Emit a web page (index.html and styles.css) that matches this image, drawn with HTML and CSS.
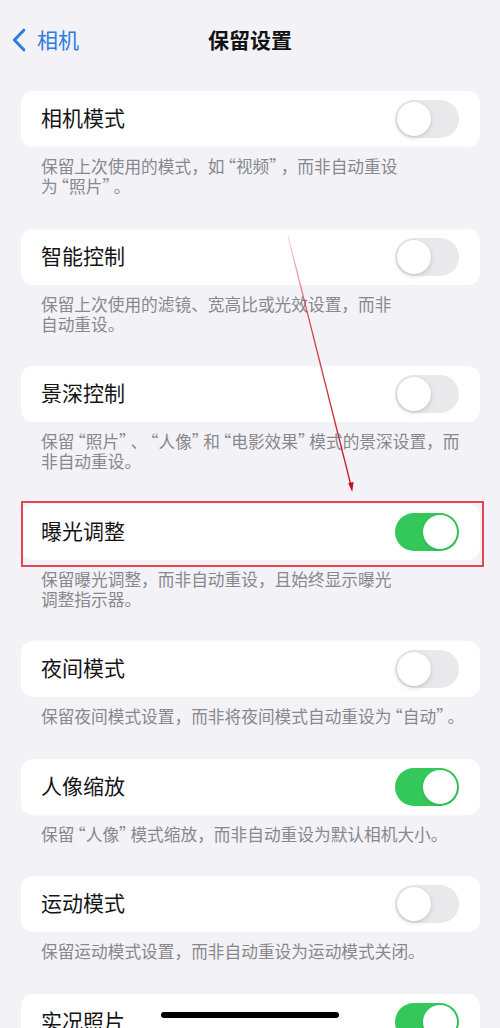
FILE: index.html
```html
<!DOCTYPE html>
<html lang="zh-CN">
<head>
<meta charset="utf-8">
<title>保留设置</title>
<link rel="stylesheet" href="styles.css">
</head>
<body>
<div class="screen">
  <header class="nav">
    <a class="back" href="#">
      <svg class="chevron" viewBox="0 0 14 24" width="14" height="24" aria-hidden="true">
        <path d="M11.8 2.2 L2.4 12 L11.8 21.8" fill="none" stroke="currentColor" stroke-width="3" stroke-linecap="round" stroke-linejoin="round"/>
      </svg>
      <span>相机</span>
    </a>
    <h1 class="title">保留设置</h1>
    <span class="nav-spacer"></span>
  </header>

  <main class="groups">
    <section class="group">
      <div class="cell"><span class="label">相机模式</span><span class="switch"></span></div>
      <p class="note">保留上次使用的模式，如<span class="qo">“</span>视频<span class="qc">”</span>，而非自动重设<br>为<span class="qo">“</span>照片<span class="qc">”</span>。</p>
    </section>
    <section class="group">
      <div class="cell"><span class="label">智能控制</span><span class="switch"></span></div>
      <p class="note">保留上次使用的滤镜、宽高比或光效设置，而非<br>自动重设。</p>
    </section>
    <section class="group">
      <div class="cell"><span class="label">景深控制</span><span class="switch"></span></div>
      <p class="note">保留<span class="qo">“</span>照片<span class="qc">”</span>、<span class="qo">“</span>人像<span class="qc">”</span>和<span class="qo">“</span>电影效果<span class="qc">”</span>模式的景深设置，而<br>非自动重设。</p>
    </section>
    <section class="group">
      <div class="cell"><span class="label">曝光调整</span><span class="switch on"></span></div>
      <p class="note">保留曝光调整，而非自动重设，且始终显示曝光<br>调整指示器。</p>
    </section>
    <section class="group">
      <div class="cell"><span class="label">夜间模式</span><span class="switch"></span></div>
      <p class="note">保留夜间模式设置，而非将夜间模式自动重设为<span class="qo">“</span>自动<span class="qc">”</span>。</p>
    </section>
    <section class="group">
      <div class="cell"><span class="label">人像缩放</span><span class="switch on"></span></div>
      <p class="note">保留<span class="qo">“</span>人像<span class="qc">”</span>模式缩放，而非自动重设为默认相机大小。</p>
    </section>
    <section class="group">
      <div class="cell"><span class="label">运动模式</span><span class="switch"></span></div>
      <p class="note">保留运动模式设置，而非自动重设为运动模式关闭。</p>
    </section>
    <section class="group">
      <div class="cell"><span class="label">实况照片</span><span class="switch on"></span></div>
      <p class="note">保留实况照片设置，而非自动重设为打开实况照片。</p>
    </section>
  </main>

  <!-- highlight frame and pointer drawn over the list -->
  <div class="mark-box"></div>
  <svg class="mark-arrow" viewBox="0 0 500 1028" width="500" height="1028" aria-hidden="true">
    <defs>
      <linearGradient id="fade" x1="288" y1="236" x2="352" y2="490" gradientUnits="userSpaceOnUse">
        <stop offset="0" stop-color="#d21c2a" stop-opacity="0.15"/>
        <stop offset="0.35" stop-color="#d01a28" stop-opacity="0.8"/>
        <stop offset="1" stop-color="#c8101e"/>
      </linearGradient>
    </defs>
    <line x1="288" y1="236" x2="350.6" y2="484" stroke="url(#fade)" stroke-width="1.3"/>
    <path d="M352.2 492 L348.2 483.2 L353.6 482 Z" fill="#c8101e"/>
  </svg>

  <div class="home-bar"></div>
</div>
</body>
</html>
```

FILE: styles.css
```css
* {
  box-sizing: border-box;
}

html,
body {
  margin: 0;
  padding: 0;
}

body {
  background: #f2f2f7;
  font-family: "Noto Sans CJK SC", "Noto Sans", sans-serif;
  color: #111113;
}

.screen {
  position: relative;
  width: 500px;
  height: 1028px;
  overflow: hidden;
  background: #f2f2f7;
}

/* navigation bar */
.nav {
  height: 82px;
  padding-bottom: 3px;
  display: grid;
  grid-template-columns: 1fr auto 1fr;
  align-items: center;
}

.back {
  display: flex;
  align-items: center;
  gap: 11px;
  padding-left: 12px;
  color: #2f7ce0;
  text-decoration: none;
  font-size: 21px;
  line-height: 1;
}

.chevron {
  display: block;
}

.title {
  margin: 0;
  font-size: 21px;
  font-weight: 700;
  line-height: 1;
  color: #121214;
}

/* grouped list */
.groups {
  padding: 9px 20px 0 21px;
}

.group {
  margin-bottom: 32.5px;
}

.cell {
  height: 56px;
  display: flex;
  align-items: center;
  justify-content: space-between;
  padding: 0 21px 0 20px;
  background: #ffffff;
  border-radius: 12px;
}

.label {
  padding-bottom: 3px;
  font-size: 21px;
  line-height: 1;
  color: #141416;
}

.note {
  margin: 0;
  padding: 9px 20px 0 20px;
  font-size: 16.7px;
  line-height: 20px;
  color: #88888d;
  white-space: nowrap;
}

/* quotation marks sit on half-width bodies, spaced on their outer side */
.qo,
.qc {
  font-feature-settings: "halt";
}

.qo {
  margin-left: 3px;
}

.qc {
  margin-right: 3px;
}

/* toggle switch */
.switch {
  position: relative;
  width: 64px;
  height: 38px;
  border-radius: 19px;
  background: #e9e9eb;
  flex: none;
}

.switch::after {
  content: "";
  position: absolute;
  top: 2px;
  left: 2px;
  width: 34px;
  height: 34px;
  border-radius: 50%;
  background: #ffffff;
  box-shadow: 0 2px 5px rgba(0, 0, 0, 0.14), 0 0 0 0.5px rgba(0, 0, 0, 0.05);
}

.switch.on {
  background: #34c759;
}

.switch.on::after {
  left: 28px;
  box-shadow: 0 1px 3px rgba(0, 0, 0, 0.12);
}

/* annotation overlay */
.mark-box {
  position: absolute;
  left: 21px;
  top: 501px;
  width: 463px;
  height: 66px;
  border: 2px solid #e4454e;
}

.mark-arrow {
  position: absolute;
  left: 0;
  top: 0;
  pointer-events: none;
}

.home-bar {
  position: absolute;
  left: 161px;
  top: 1012px;
  width: 178px;
  height: 6px;
  border-radius: 3px;
  background: #000000;
}
```
